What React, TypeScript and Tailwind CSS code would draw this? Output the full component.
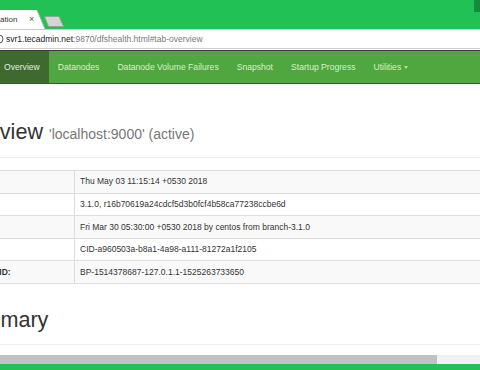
import React from 'react';

const font = { fontFamily: '"Liberation Sans", Arial, sans-serif' };

const navItems = ['Overview', 'Datanodes', 'Datanode Volume Failures', 'Snapshot', 'Startup Progress'];

const rows: [string, string][] = [
  ['Started:', 'Thu May 03 11:15:14 +0530 2018'],
  ['Version:', '3.1.0, r16b70619a24cdcf5d3b0fcf4b58ca77238ccbe6d'],
  ['Compiled:', 'Fri Mar 30 05:30:00 +0530 2018 by centos from branch-3.1.0'],
  ['Cluster ID:', 'CID-a960503a-b8a1-4a98-a111-81272a1f2105'],
  ['Block Pool ID:', 'BP-1514378687-127.0.1.1-1525263733650'],
];

const BrowserChrome: React.FC = () => (
  <div className="relative h-[29px] bg-[#21c156] overflow-hidden">
    {/* active tab */}
    <div className="absolute left-0 top-[10px] h-[19px] w-[46px]">
      <svg width="46" height="19" className="absolute inset-0">
        <path d="M0 0 H37 L45 19 H0 Z" fill="#ffffff" />
        <path d="M37 0 L45 19" stroke="#9bb7a0" strokeWidth="1" fill="none" />
      </svg>
      <span className="absolute left-0 top-[5px] text-[8px] leading-[9px] text-[#333]">ation</span>
      <span className="absolute left-[29px] top-[4px] text-[9px] leading-[10px] text-[#555]">×</span>
    </div>
    {/* new tab button */}
    <svg width="22" height="11" className="absolute left-[43px] top-[16px]">
      <path d="M1.5 0.5 H16 L20.5 10.5 H5.5 Z" fill="#d5d5d5" stroke="#8fa894" strokeWidth="1" />
    </svg>
    <div className="absolute right-0 top-0 h-[12px] w-[6px] bg-[#178a3c]" />
  </div>
);

const AddressBar: React.FC = () => (
  <div className="h-[22px] bg-white border-t border-[#cfcfcf] relative">
    <div className="h-[19px] border-b border-[#cfcfcf] flex items-center">
      <svg width="10" height="10" className="-ml-[6px] mr-[2px]">
        <circle cx="5" cy="5" r="4" fill="none" stroke="#555" strokeWidth="1" />
      </svg>
      <span className="text-[8.5px] leading-none text-[#222]">svr1.tecadmin.net</span>
      <span className="text-[8.5px] leading-none text-[#7a7a7a]">:9870/dfshealth.html#tab-overview</span>
    </div>
    <div className="absolute left-0 right-0 bottom-0 h-[1px] bg-[#3c3c3c]" />
  </div>
);

const Navbar: React.FC = () => (
  <div className="h-[33px] bg-[#50a63f] border-b border-[#2f5f25] flex -ml-[5px] overflow-hidden">
    {navItems.map((item, i) => (
      <div
        key={item}
        className={`px-[9px] flex items-center text-[8.6px] whitespace-nowrap ${
          i === 0 ? 'bg-[#3e6a2f] text-[#e4eee0]' : 'text-[#d8f0cd]'
        }`}
      >
        {item}
      </div>
    ))}
    <div className="px-[9px] flex items-center text-[8.6px] text-[#d8f0cd] whitespace-nowrap">
      Utilities
      <span className="ml-[3px] inline-block w-0 h-0 border-l-[2.5px] border-r-[2.5px] border-t-[3px] border-l-transparent border-r-transparent border-t-[#b9dcad]" />
    </div>
  </div>
);

export default function App() {
  return (
    <div className="w-[480px] h-[370px] overflow-hidden bg-white flex flex-col" style={font}>
      <BrowserChrome />
      <AddressBar />
      <Navbar />

      <div className="flex-1 overflow-hidden">
        <div className="-ml-[47px] mt-[36px] pb-[11px] border-b border-[#eeeeee] w-[600px]">
          <h1 className="text-[21.6px] leading-[24px] text-[#333] whitespace-nowrap">
            Overview <small className="text-[14px] text-[#777]">'localhost:9000' (active)</small>
          </h1>
        </div>

        <table className="-ml-[53px] mt-[12px] w-[640px] border-collapse text-[8.5px] text-[#333]">
          <tbody>
            {rows.map(([label, value], i) => (
              <tr key={label} className={`h-[22.6px] ${i % 2 === 0 ? 'bg-[#f9f9f9]' : 'bg-white'}`}>
                <th className="w-[127px] px-[5px] text-left font-bold border border-[#dddddd] whitespace-nowrap">
                  {label}
                </th>
                <td className="px-[5px] text-left border border-[#dddddd] whitespace-nowrap">{value}</td>
              </tr>
            ))}
          </tbody>
        </table>

        <div className="-ml-[44px] mt-[24px] pb-[12px] border-b border-[#eeeeee] w-[600px]">
          <h1 className="text-[21.6px] leading-[24px] text-[#333]">Summary</h1>
        </div>
      </div>

      <div className="h-[9px] bg-[#f1f1f1] flex">
        <div className="w-[437px] bg-[#c1c1c1]" />
      </div>
      <div className="h-[6px] bg-[#21c156]" />
    </div>
  );
}
